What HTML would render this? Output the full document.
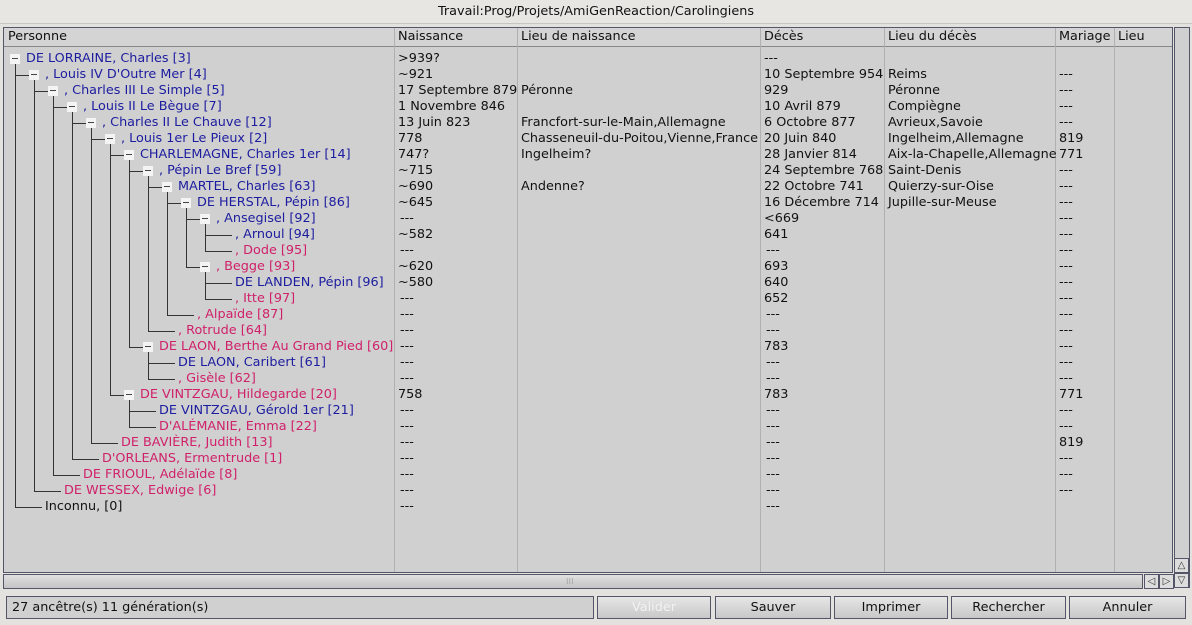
<!DOCTYPE html>
<html><head><meta charset="utf-8">
<style>
*{margin:0;padding:0;box-sizing:border-box}
body{width:1192px;height:625px;background:#e4e2de;font-family:"DejaVu Sans","Liberation Sans",sans-serif;font-size:12.8px;color:#111;position:relative;overflow:hidden}
.abs{position:absolute;white-space:nowrap}
#title{left:0;top:0;width:1192px;height:24px;text-align:center;line-height:24px;font-size:12.8px;background:#e8e6e2;border-bottom:1px solid #c8c6c2}
#table{left:3px;top:27px;width:1170px;height:546px;background:#d0d0d0;border:1px solid #55556a}
#hdr{left:0;top:0;width:1168px;height:19px;border-bottom:1px solid #888;background:#d4d4d4}
.col{position:absolute;top:0;bottom:0;width:1px;background:#b0b0b0}
.ht{position:absolute;top:1px}
.r{position:absolute;height:16px;line-height:16px;white-space:nowrap}
.b{color:#1c1ca0}.p{color:#d0206a}
.box{position:absolute;width:10px;height:10px;background:#f4f4f4}
.box:after{content:"";position:absolute;left:2px;top:4px;width:6px;height:1px;background:#444}
.ln{position:absolute;background:#333}
#vs{left:1174px;top:27px;width:16px;height:561px;background:#d0d0d0;border:1px solid #55556a}
#hs{left:3px;top:574px;width:1140px;height:15px;background:linear-gradient(#e0e0e0,#c4c4c4);border:1px solid #55556a}
.arr{position:absolute;width:15px;height:15px;background:#ddd;border:1px solid #55556a;font-size:10px;text-align:center;line-height:13px;color:#333}
#status{left:6px;top:596px;width:588px;height:23px;background:#d0d0d0;border:1px solid #55556a;padding-left:5px;line-height:21px}
.btn{position:absolute;top:596px;height:23px;border:1px solid #55556a;background:linear-gradient(#e6e6e6,#c8c8c8);text-align:center;line-height:21px}
</style></head><body>
<div id="title" class="abs">Travail:Prog/Projets/AmiGenReaction/Carolingiens</div>
<div id="table" class="abs">
 <div id="hdr" class="abs">
  <span class="ht" style="left:4px">Personne</span>
  <span class="ht" style="left:394px">Naissance</span>
  <span class="ht" style="left:517px">Lieu de naissance</span>
  <span class="ht" style="left:760px">Décès</span>
  <span class="ht" style="left:884px">Lieu du décès</span>
  <span class="ht" style="left:1055px">Mariage</span>
  <span class="ht" style="left:1114px">Lieu</span>
 </div>
 <div id="body"></div>
</div>
<div id="vs" class="abs">
 <div class="arr" style="left:-1px;top:530px">△</div>
 <div class="arr" style="left:-1px;top:545px">▽</div>
</div>
<div id="hs" class="abs"><div style="position:absolute;left:562px;top:2px;font-size:8px;color:#777">⁝⁝⁝</div></div>
<div class="arr abs" style="left:1144px;top:574px">◁</div>
<div class="arr abs" style="left:1159px;top:574px">▷</div>
<div id="status" class="abs">27 ancêtre(s) 11 génération(s)</div>
<div class="btn" style="left:597px;width:114px;color:#f2f2f2">Valider</div>
<div class="btn" style="left:715px;width:116px">Sauver</div>
<div class="btn" style="left:834px;width:114px">Imprimer</div>
<div class="btn" style="left:951px;width:115px">Rechercher</div>
<div class="btn" style="left:1069px;width:117px">Annuler</div>
<script>
var D=[
[0,"DE LORRAINE, Charles [3]","b",1,">939?","","---","",""],
[1,", Louis IV D'Outre Mer [4]","b",1,"~921","","10 Septembre 954","Reims","---"],
[2,", Charles III Le Simple [5]","b",1,"17 Septembre 879","Péronne","929","Péronne","---"],
[3,", Louis II Le Bègue [7]","b",1,"1 Novembre 846","","10 Avril 879","Compiègne","---"],
[4,", Charles II Le Chauve [12]","b",1,"13 Juin 823","Francfort-sur-le-Main,Allemagne","6 Octobre 877","Avrieux,Savoie","---"],
[5,", Louis 1er Le Pieux [2]","b",1,"778","Chasseneuil-du-Poitou,Vienne,France","20 Juin 840","Ingelheim,Allemagne","819"],
[6,"CHARLEMAGNE, Charles 1er [14]","b",1,"747?","Ingelheim?","28 Janvier 814","Aix-la-Chapelle,Allemagne","771"],
[7,", Pépin Le Bref [59]","b",1,"~715","","24 Septembre 768","Saint-Denis","---"],
[8,"MARTEL, Charles [63]","b",1,"~690","Andenne?","22 Octobre 741","Quierzy-sur-Oise","---"],
[9,"DE HERSTAL, Pépin [86]","b",1,"~645","","16 Décembre 714","Jupille-sur-Meuse","---"],
[10,", Ansegisel [92]","b",1," ---","","<669","","---"],
[11,", Arnoul [94]","b",0,"~582","","641","","---"],
[11,", Dode [95]","p",0," ---",""," ---","","---"],
[10,", Begge [93]","p",1,"~620","","693","","---"],
[11,"DE LANDEN, Pépin [96]","b",0,"~580","","640","","---"],
[11,", Itte [97]","p",0," ---","","652","","---"],
[9,", Alpaïde [87]","p",0," ---",""," ---","","---"],
[8,", Rotrude [64]","p",0," ---",""," ---","","---"],
[7,"DE LAON, Berthe Au Grand Pied [60]","p",1," ---","","783","","---"],
[8,"DE LAON, Caribert [61]","b",0," ---",""," ---","","---"],
[8,", Gisèle [62]","p",0," ---",""," ---","","---"],
[6,"DE VINTZGAU, Hildegarde [20]","p",1,"758","","783","","771"],
[7,"DE VINTZGAU, Gérold 1er [21]","b",0," ---",""," ---","","---"],
[7,"D'ALÉMANIE, Emma [22]","p",0," ---",""," ---","","---"],
[5,"DE BAVIÈRE, Judith [13]","p",0," ---",""," ---","","819"],
[4,"D'ORLEANS, Ermentrude [1]","p",0," ---",""," ---","","---"],
[3,"DE FRIOUL, Adélaïde [8]","p",0," ---",""," ---","","---"],
[2,"DE WESSEX, Edwige [6]","p",0," ---",""," ---","","---"],
[1,"Inconnu,  [0]","",0," ---",""," ---","",""]
];
var h='';
[390,513,756,880,1051,1110].forEach(function(x){h+='<div class="col" style="left:'+x+'px"></div>';});
var cx=[394,517,760,884,1055];
for(var i=0;i<D.length;i++){
 var d=D[i],L=d[0],y=23+16*i,cy=y+8;
 var tx=22+19*L;
 if(d[3])h+='<div class="box" style="left:'+(6+19*L)+'px;top:'+(cy-5)+'px"></div>';
 if(L>0){
  var px=11+19*(L-1);
  var j=i-1;while(D[j][0]!=L-1)j--;
  var pcy=23+16*j+8;
  h+='<div class="ln" style="left:'+px+'px;top:'+(pcy+5)+'px;width:1px;height:'+(cy-pcy-5)+'px"></div>';
  var ex=d[3]?(6+19*L):(tx-3);
  h+='<div class="ln" style="left:'+px+'px;top:'+cy+'px;height:1px;width:'+(ex-px)+'px"></div>';
 }
 h+='<div class="r '+d[2]+'" style="left:'+tx+'px;top:'+y+'px">'+d[1].replace(/&/g,'&amp;').replace(/</g,'&lt;')+'</div>';
 for(var k=0;k<5;k++){var t=d[4+k];if(t)h+='<div class="r" style="left:'+(cx[k]+(t[0]==' '?2:0))+'px;top:'+y+'px">'+t.trim().replace(/</g,'&lt;').replace(/>/g,'&gt;')+'</div>';}
}
document.getElementById('body').innerHTML=h;
</script>
</body></html>
